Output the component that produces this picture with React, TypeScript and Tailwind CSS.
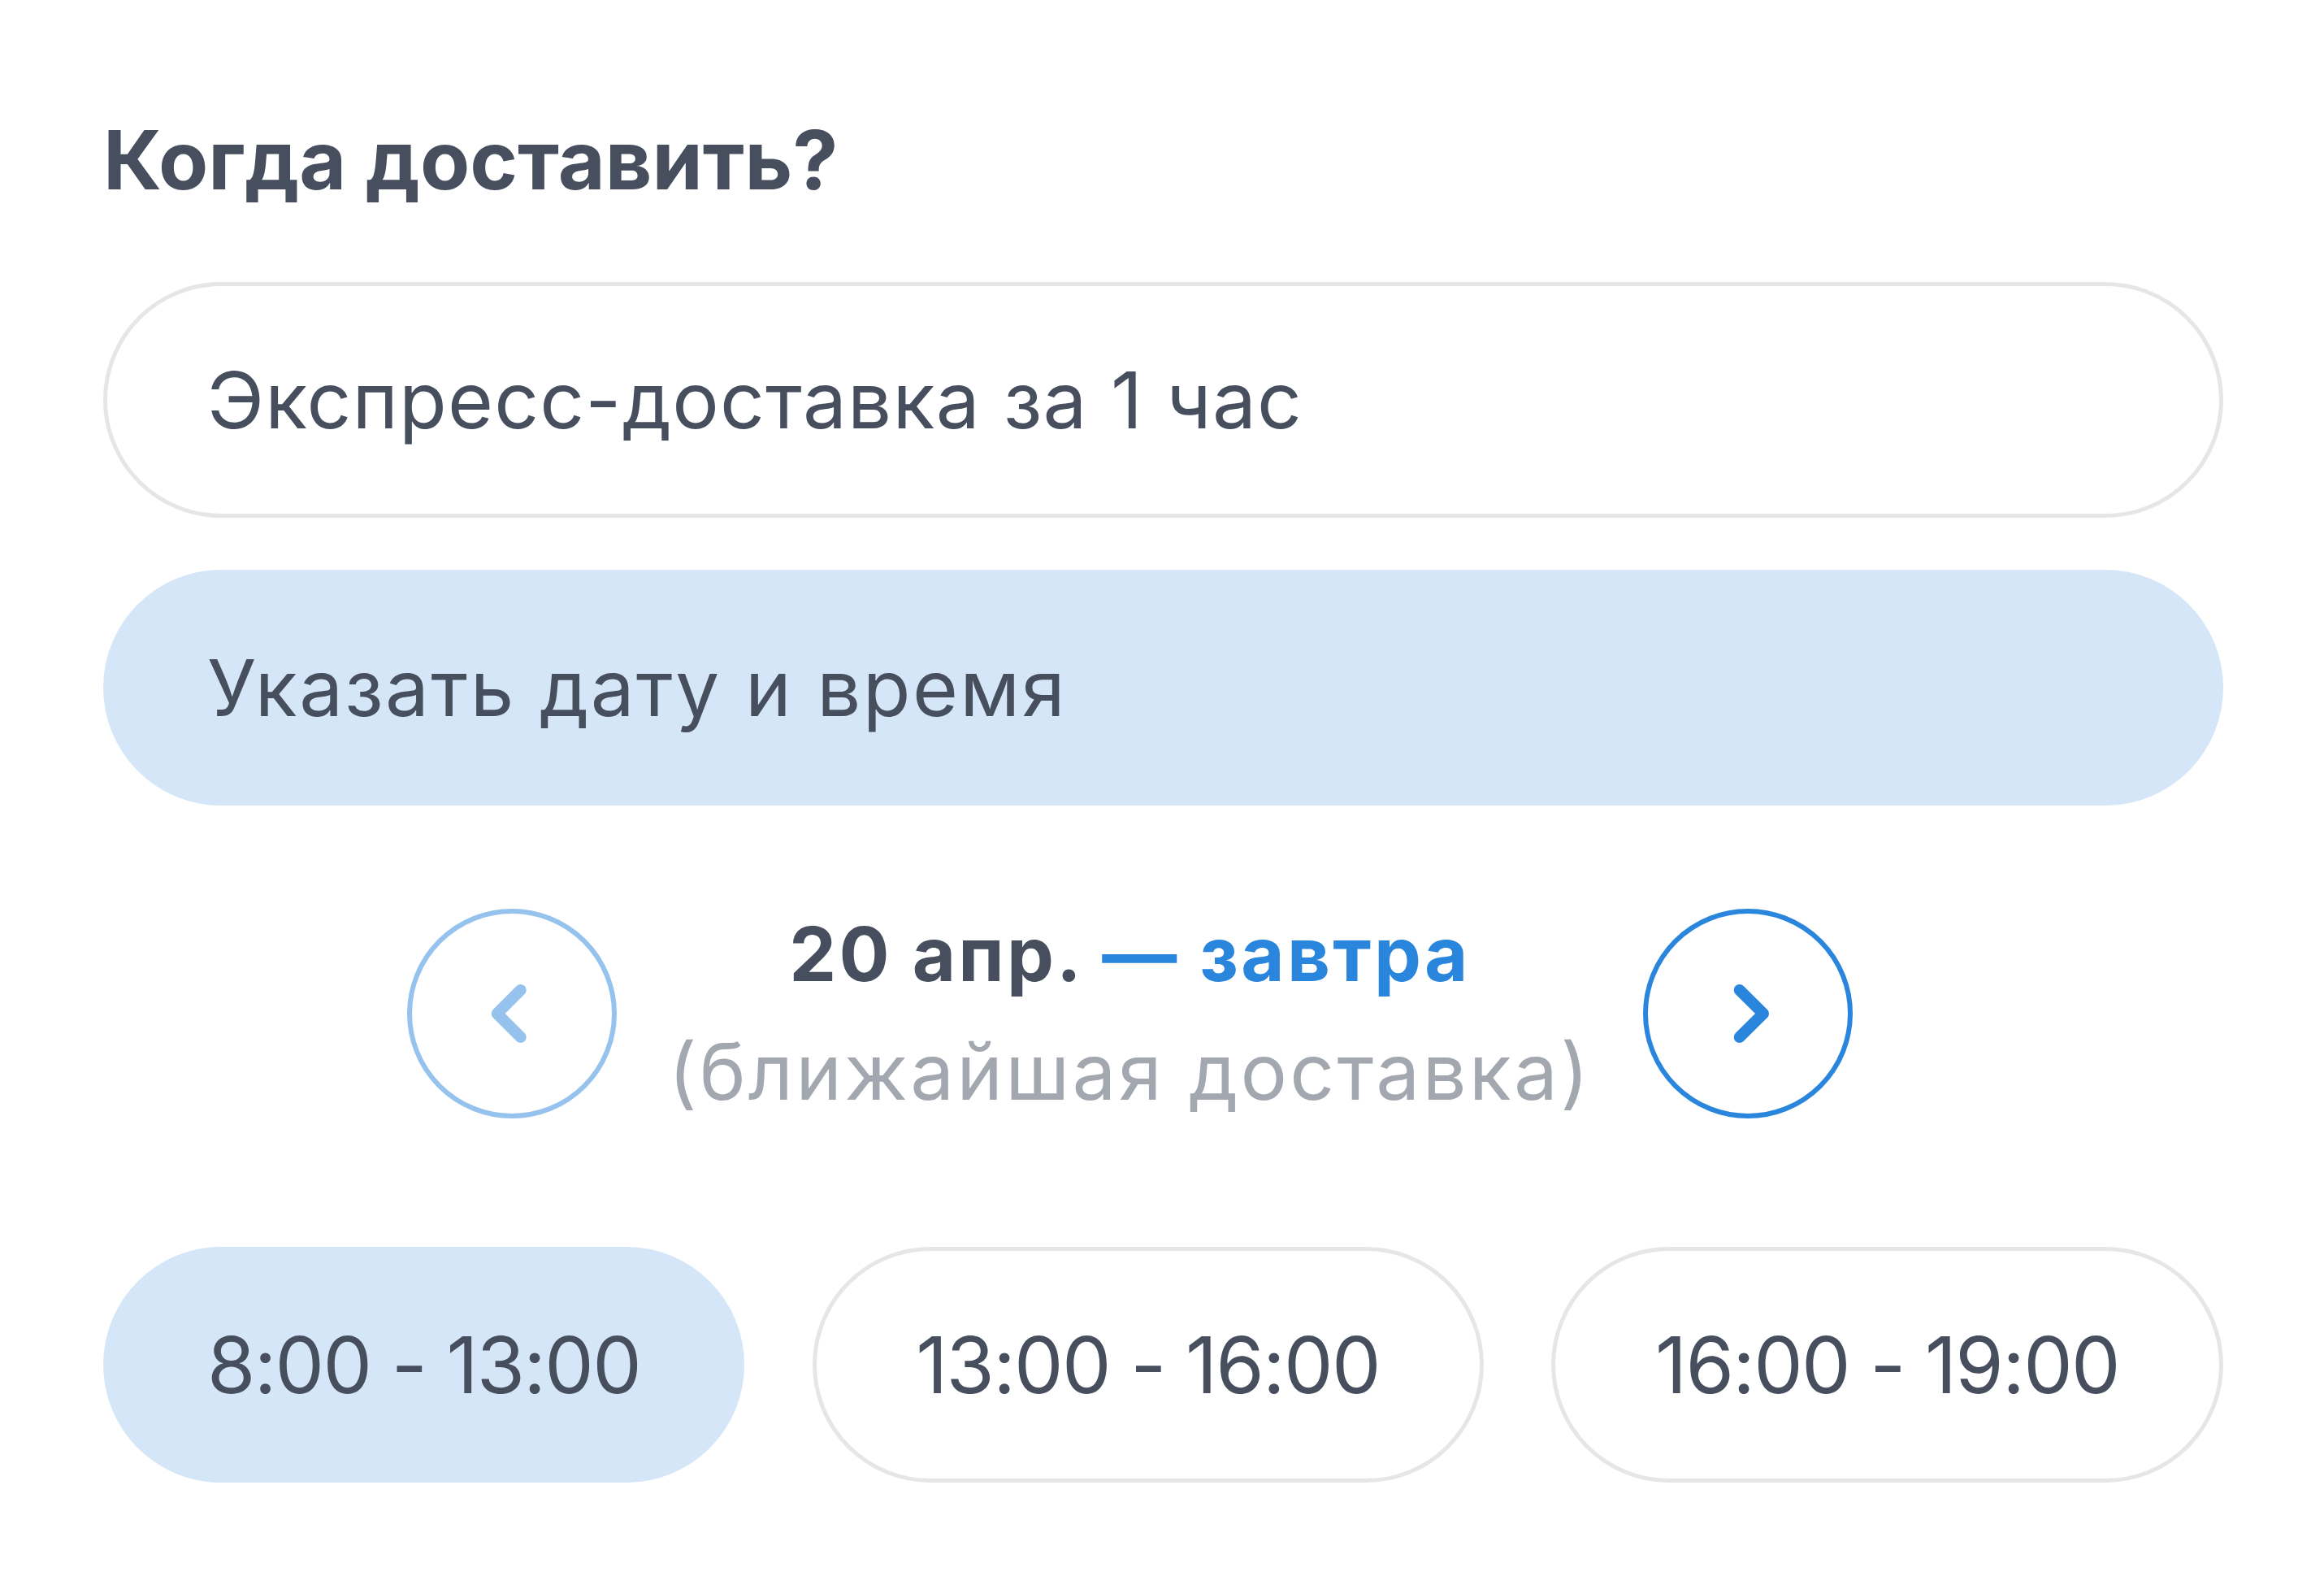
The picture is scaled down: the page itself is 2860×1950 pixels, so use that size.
import React from "react";

const slots = [
  { label: "8:00 - 13:00", active: true, width: "w-[789px]" },
  { label: "13:00 - 16:00", active: false, width: "w-[826px]" },
  { label: "16:00 - 19:00", active: false, width: "w-[827px]" },
];

function Chevron({ dir, color }: { dir: "left" | "right"; color: string }) {
  const points =
    dir === "left" ? "10.7,-29 -18.3,0 10.7,29" : "-10.3,-29 19,0 -10.3,29";
  return (
    <svg viewBox="-123 -123 246 246" className="w-full h-full">
      <polyline
        points={points}
        fill="none"
        stroke={color}
        strokeWidth={14}
        strokeLinecap="round"
        strokeLinejoin="round"
      />
    </svg>
  );
}

export default function App() {
  return (
    <div
      className="w-[2860px] h-[1950px] bg-white pl-[127px] pr-[124px] pt-[147px] text-[#474f5e]"
      style={{ fontFamily: "Inter, 'Noto Sans', sans-serif" }}
    >
      <h1 className="text-[100px] leading-[100px] font-bold">Когда доставить?</h1>

      <div className="mt-[100px] flex flex-col gap-[64px]">
        <div className="h-[290px] rounded-full border-[5px] border-[#e6e6e6] flex items-center pl-[123px]">
          <span className="text-[96px] leading-none tracking-[1.2px]">Экспресс-доставка за 1 час</span>
        </div>
        <div className="h-[290px] rounded-full bg-[#d4e6f7] flex items-center pl-[128px]">
          <span className="text-[96px] leading-none tracking-[2.3px]">Указать дату и время</span>
        </div>
      </div>

      {/* выбор даты */}
      <div className="mt-[127px] flex justify-center items-center pr-[82px]">
        <button className="w-[258px] h-[258px] shrink-0 rounded-full border-[6px] border-[#95c3ed]">
          <Chevron dir="left" color="#95c3ed" />
        </button>
        <div className="w-[1263px] text-center">
          <div className="text-[92px] leading-[92px] font-bold tracking-[3.2px]">
            20 апр. <span className="text-[#2a86dd]">— завтра</span>
          </div>
          <div className="mt-[50px] text-[96px] leading-[96px] text-[#a3a8b0] tracking-[3.2px]">
            (ближайшая доставка)
          </div>
        </div>
        <button className="w-[258px] h-[258px] shrink-0 rounded-full border-[6px] border-[#2a86dd]">
          <Chevron dir="right" color="#2a86dd" />
        </button>
      </div>

      <div className="mt-[158px] flex justify-between">
        {slots.map((s) => (
          <div
            key={s.label}
            className={
              s.active
                ? `${s.width} h-[290px] rounded-full bg-[#d4e6f7] flex items-center justify-center`
                : `${s.width} h-[290px] rounded-full border-[5px] border-[#e6e6e6] flex items-center justify-center`
            }
          >
            <span className="text-[96px] leading-none tracking-[-1.7px]">{s.label}</span>
          </div>
        ))}
      </div>
    </div>
  );
}
